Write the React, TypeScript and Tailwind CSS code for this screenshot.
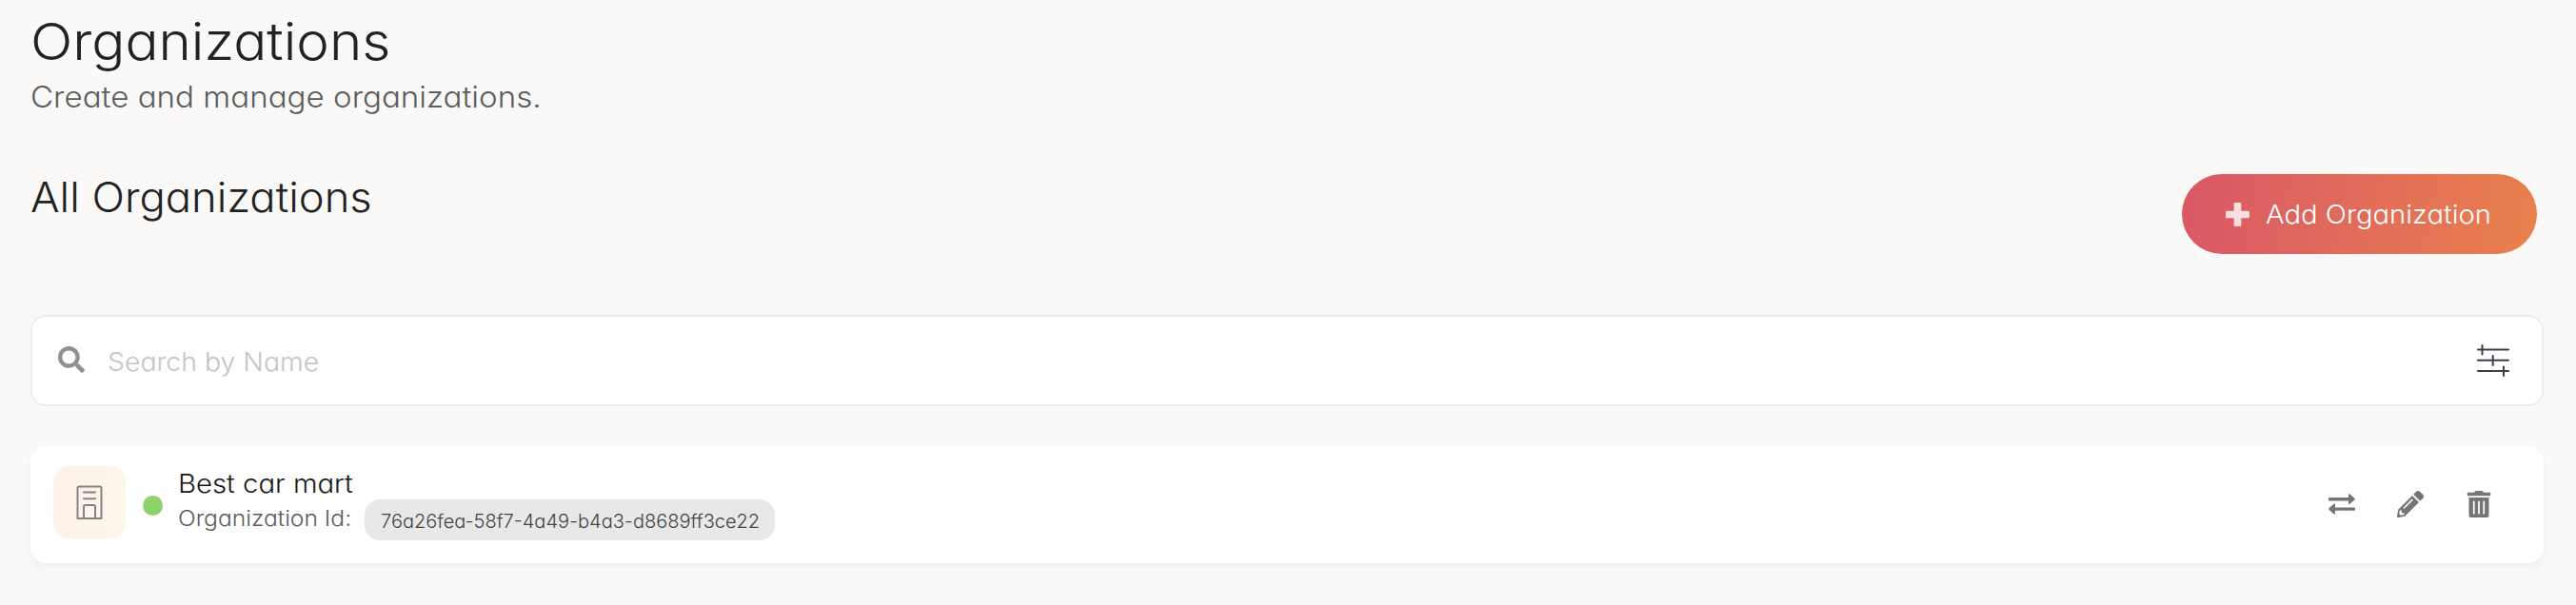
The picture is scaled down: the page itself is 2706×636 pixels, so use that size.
import { FaPencilAlt, FaSearch, FaTrashAlt } from "react-icons/fa";

function PlusIcon() {
  return (
    <svg width="25" height="25" viewBox="0 0 25 25" fill="#fff" fillOpacity="0.8">
      <path d="M10 0h5q1.300 0 1.300 1.300v7.500h7.400Q25 8.800 25 10v5q0 1.200-1.300 1.200h-7.400v7.500Q16.300 25 15 25h-5q-1.300 0-1.300-1.300v-7.500H1.300Q0 16.200 0 15v-5q0-1.200 1.300-1.200h7.400V1.300Q8.700 0 10 0z" />
    </svg>
  );
}

function BuildingIcon() {
  return (
    <svg width="28" height="36" viewBox="0 0 28 36" fill="none" stroke="#858381" strokeWidth="2" strokeLinejoin="round">
      <path d="M1.500 35V3a1.500 1.500 0 0 1 1.500-1.500h22A1.500 1.500 0 0 1 26.500 3v32z" />
      <path d="M8 7.500h12M8 14.300h12" strokeLinecap="round" />
      <path d="M8 35V22.500a1.500 1.500 0 0 1 1.500-1.500h9a1.500 1.500 0 0 1 1.500 1.500V35" />
    </svg>
  );
}

function FilterIcon() {
  return (
    <svg width="34" height="34" viewBox="0 0 34 34" fill="none" stroke="#3f3b4a" strokeWidth="2" strokeLinecap="round">
      <path d="M1 5.500h32M1 16.800h32M1 28h32M5.500 1v9.500M16.700 12v10M28 23.500v9.500" />
    </svg>
  );
}

function SwapIcon() {
  return (
    <svg width="28" height="22" viewBox="0 0 28 22" fill="#757575">
      <path d="M1 4h20V1.200Q21-.4 22.500.4L27.300 4.700Q28.300 5.600 27.300 6.500L22.500 10.800Q21 11.600 21 10V7.400H1Q0 7.400 0 6.400V5Q0 4 1 4z" />
      <path d="M27 14.400H7v-2.800Q7 10 5.500 10.800L.7 15.100Q-.3 16 .7 16.900l4.800 4.300Q7 22 7 20.400v-2.600h20q1 0 1-1v-1.400q0-1-1-1z" />
    </svg>
  );
}

export default function App() {
  return (
    <main className="h-[636px] w-full overflow-hidden bg-[#faf9f8] pl-8 pr-[34px] font-['Inter',sans-serif] text-[#222] [font-feature-settings:'cv11']">
      <header className="flex flex-col items-start pt-[16px]">
        <h1 className="h-[56px] origin-left scale-x-[1.08] whitespace-nowrap text-[54px] leading-[56px] font-light">Organizations</h1>
        <p className="mt-[10px] h-[40px] origin-left scale-x-[1.068] whitespace-nowrap text-[31px] leading-[40px] font-light text-[#5c5c5c]">
          Create and manage organizations.
        </p>
      </header>

      <section className="mt-[61px] flex h-[84px] items-start justify-between">
        <h2 className="mt-[-1px] origin-left scale-x-[1.055] whitespace-nowrap text-[43px] leading-[50px] font-light">All Organizations</h2>
        <button className="mr-[7px] flex h-[84px] w-[373px] items-center rounded-full bg-[linear-gradient(100deg,#d95767,#e9814d)] pl-[46px] text-white">
          <PlusIcon />
          <span className="mt-[2px] ml-[17px] origin-left scale-x-[1.08] whitespace-nowrap text-[27px] font-light">Add Organization</span>
        </button>
      </section>

      <div className="mt-[64px] flex h-24 items-center rounded-2xl border-2 border-[#ececec] bg-white pr-[34px] pl-[27px]">
        <FaSearch className="mt-[-3px] size-7 text-[#909090]" />
        <input
          aria-label="Search"
          placeholder="Search by Name"
          className="mt-[3px] ml-[24px] h-16 w-[2200px] origin-left scale-x-[1.053] bg-transparent text-[27px] font-light outline-none placeholder:text-[#c4c4c4]"
        />
        <div className="ml-auto">
          <FilterIcon />
        </div>
      </div>

      <article className="mt-[42px] flex h-[123px] rounded-2xl bg-white pr-[54px] pl-6 shadow-[0_4px_6px_rgba(40,50,90,0.05)]">
        <div className="mt-[21px] flex size-[76px] items-center justify-center rounded-2xl bg-gradient-to-r from-[#fdf1e9] to-[#fdf6ea]">
          <BuildingIcon />
        </div>
        <span className="mt-[52px] ml-[18px] size-[21px] rounded-full bg-[#8fd16c]" />
        <div className="ml-[16px] flex flex-col items-start">
          <h3 className="mt-[24px] h-8 origin-left scale-x-[1.085] whitespace-nowrap text-[27px] leading-8 font-light text-[#181818]">Best car mart</h3>
          <div className="flex h-[43px] items-start">
            <span className="mt-[5px] w-[196px] origin-left scale-x-[1.07] whitespace-nowrap text-[23px] leading-[30px] font-light text-[#5c5c5c]">
              Organization Id:
            </span>
            <span className="flex h-[43px] w-[431px] items-center rounded-2xl bg-[#e8e8e8] pt-[2px] pl-[17px] text-[20px] whitespace-nowrap font-light text-[#444]">
              76a26fea-58f7-4a49-b4a3-d8689ff3ce22
            </span>
          </div>
        </div>
        <div className="ml-auto flex h-[121px] items-center text-[#757575]">
          <SwapIcon />
          <FaPencilAlt className="ml-[44px] size-7" />
          <FaTrashAlt className="ml-[44px] size-7" />
        </div>
      </article>
    </main>
  );
}
